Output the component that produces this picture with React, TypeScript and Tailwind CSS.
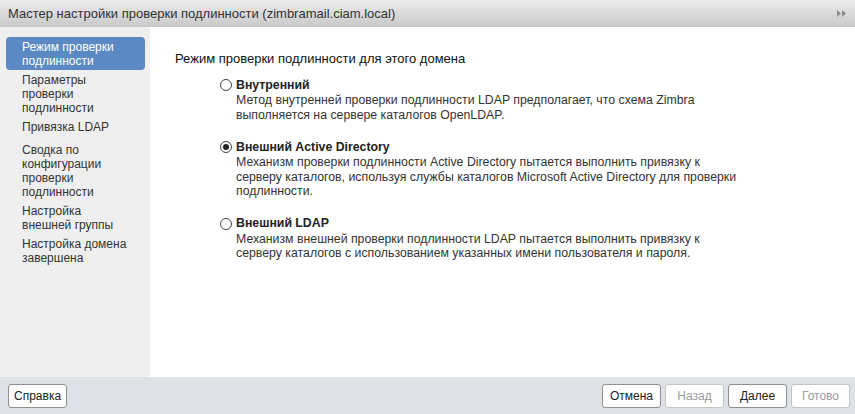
import { useState } from 'react';

const steps = [
    { label: ['Режим проверки', 'подлинности'] },
    { label: ['Параметры', 'проверки', 'подлинности'] },
    { label: ['Привязка LDAP'] },
    { label: ['Сводка по', 'конфигурации', 'проверки', 'подлинности'], extra: true },
    { label: ['Настройка', 'внешней группы'] },
    { label: ['Настройка домена', 'завершена'] },
];

const modes = [
    {
        id: 'internal',
        title: 'Внутренний',
        desc: [
            'Метод внутренней проверки подлинности LDAP предполагает, что схема Zimbra',
            'выполняется на сервере каталогов OpenLDAP.',
        ],
    },
    {
        id: 'ad',
        title: 'Внешний Active Directory',
        desc: [
            'Механизм проверки подлинности Active Directory пытается выполнить привязку к',
            'серверу каталогов, используя службы каталогов Microsoft Active Directory для проверки',
            'подлинности.',
        ],
    },
    {
        id: 'ldap',
        title: 'Внешний LDAP',
        desc: [
            'Механизм внешней проверки подлинности LDAP пытается выполнить привязку к',
            'серверу каталогов с использованием указанных имени пользователя и пароля.',
        ],
    },
];

const Radio = ({ checked }: { checked: boolean }) => (
    <span className="flex h-[12px] w-[12px] items-center justify-center rounded-full border border-[#444] bg-white">
        {checked && <span className="h-[6px] w-[6px] rounded-full bg-[#222]" />}
    </span>
);

const Button = ({ label, disabled }: { label: string; disabled?: boolean }) => (
    <button
        disabled={disabled}
        className={
            disabled
                ? 'h-[24px] min-w-[59px] rounded-[3px] border border-[#c4c4c4] bg-white px-[5px] text-[12px] text-[#9a9a9a]'
                : 'h-[24px] min-w-[59px] rounded-[3px] border border-[#8f8f8f] bg-white px-[5px] text-[12px] text-[#222]'
        }
    >
        {label}
    </button>
);

const App = () => {
    const [mode, setMode] = useState('ad');

    return (
        <div className="flex h-[414px] w-[855px] flex-col overflow-hidden bg-white font-['Liberation_Sans',Arial,sans-serif] text-[#333]">
            {/* title bar */}
            <div className="flex h-[27px] shrink-0 items-center justify-between bg-gradient-to-b from-[#ececec] to-[#c9c9c9] pl-[8px] pr-[9px]">
                <span className="text-[13px] text-[#333]">
                    Мастер настройки проверки подлинности (zimbramail.ciam.local)
                </span>
                <svg width="9" height="7" viewBox="0 0 9 7">
                    <path d="M0 0 L4 3.5 L0 7 Z" fill="#8c8c8c" />
                    <path d="M5 0 L9 3.5 L5 7 Z" fill="#8c8c8c" />
                </svg>
            </div>

            <div className="flex min-h-0 flex-1">
                {/* steps */}
                <div className="w-[150px] shrink-0 bg-[#efefef] pl-[6px] pr-[5px] pt-[10px]">
                    {steps.map((step, i) => (
                        <div
                            key={i}
                            className={
                                (i === 0
                                    ? 'rounded-[4px] bg-[#5a89c3] text-white '
                                    : 'text-[#333] ') +
                                (step.extra ? 'mt-[4px] ' : '') +
                                'pb-[2px] pl-[16px] pt-[3px] text-[12px] leading-[14px]'
                            }
                        >
                            {step.label.map((line) => (
                                <div key={line}>{line}</div>
                            ))}
                        </div>
                    ))}
                </div>

                {/* content */}
                <div className="flex-1 pl-[25px] pt-[25px]">
                    <div className="text-[13px] leading-[14px] text-[#111]">
                        Режим проверки подлинности для этого домена
                    </div>
                    <div className="mt-[11px] flex flex-col gap-[17px] pl-[45px]">
                        {modes.map((m) => (
                            <label
                                key={m.id}
                                className="flex cursor-pointer flex-col"
                                onClick={() => setMode(m.id)}
                            >
                                <div className="flex h-[16px] items-center gap-[4px]">
                                    <Radio checked={mode === m.id} />
                                    <span className="text-[12.3px] font-bold text-[#222]">{m.title}</span>
                                </div>
                                <div className="pl-[16px] text-[12.3px] leading-[14.5px] text-[#333]">
                                    {m.desc.map((line) => (
                                        <div key={line} className="whitespace-nowrap">
                                            {line}
                                        </div>
                                    ))}
                                </div>
                            </label>
                        ))}
                    </div>
                </div>
            </div>

            {/* footer */}
            <div className="flex h-[37px] shrink-0 items-center justify-between bg-[#dee1e6] pl-[8px] pr-[5px]">
                <Button label="Справка" />
                <div className="flex gap-[4px]">
                    <Button label="Отмена" />
                    <Button label="Назад" disabled />
                    <Button label="Далее" />
                    <Button label="Готово" disabled />
                </div>
            </div>
        </div>
    );
};

export default App;
